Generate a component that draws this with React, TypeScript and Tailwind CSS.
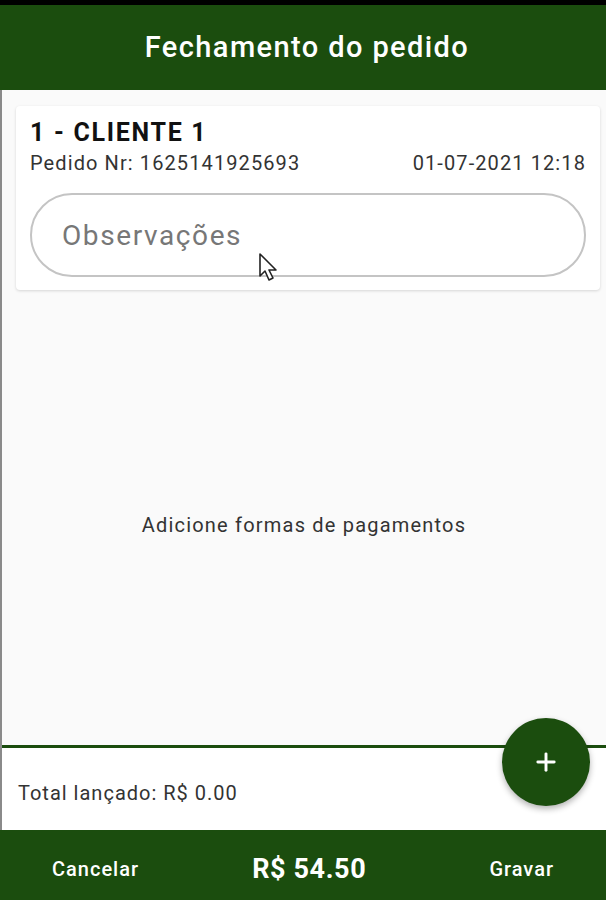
import { Plus } from 'lucide-react';

export default function App() {
  return (
    <div className="flex h-[900px] w-[606px] flex-col overflow-hidden bg-[#fafafa] font-['Roboto',sans-serif]">
      <div className="h-[5px] bg-black" />

      {/* Header */}
      <header className="flex h-[85px] items-center justify-center bg-[#1b4d0e]">
        <h1 className="pl-[8px] text-[29px] font-medium tracking-[1.4px] text-white">Fechamento do pedido</h1>
      </header>

      <main className="flex flex-1 flex-col border-l-2 border-[#8a8a8a]">
        {/* Order card */}
        <div className="relative ml-[14px] mr-[6px] mt-[16px] rounded bg-white px-[14px] pb-[13px] pt-[12px] shadow-[0_1px_3px_rgba(0,0,0,0.15)]">
          <div className="text-[25px] font-bold leading-[30px] tracking-[1.7px] text-[#111]">1 - CLIENTE 1</div>
          <div className="mt-[2px] flex justify-between text-[20px] leading-[26px] tracking-[1.1px] text-[#333]">
            <span>Pedido Nr: 1625141925693</span>
            <span>01-07-2021 12:18</span>
          </div>
          <input
            placeholder="Observações"
            className="mt-[17px] h-[84px] w-full rounded-full border-2 border-[#c4c4c4] px-[30px] text-[28px] tracking-[1.6px] text-[#333] placeholder:text-[#777] focus:outline-none"
          />
          <svg
            className="absolute left-[242px] top-[146px]"
            width="22"
            height="30"
            viewBox="0 0 22 30"
          >
            <path
              d="M2 2 L2 24 L7 19 L11 28 L15 26 L11 18 L18 18 Z"
              fill="white"
              stroke="#222"
              strokeWidth="1.6"
              strokeLinejoin="round"
            />
          </svg>
        </div>

        <div className="flex flex-1 items-center justify-center pt-[14px]">
          <p className="text-[20px] tracking-[1.2px] text-[#333]">Adicione formas de pagamentos</p>
        </div>

        {/* Totals */}
        <div className="relative h-[85px] border-t-[3px] border-[#1b4d0e] bg-white">
          <p className="absolute left-[16px] top-[30px] text-[20px] tracking-[1px] text-[#333]">Total lançado: R$ 0.00</p>
          <button className="absolute left-[500px] top-[-30px] flex h-[88px] w-[88px] items-center justify-center rounded-full bg-[#1b4d0e] text-white shadow-[0_3px_6px_rgba(0,0,0,0.3)]">
            <Plus size={28} strokeWidth={2.5} />
          </button>
        </div>
      </main>

      {/* Bottom bar */}
      <footer className="flex h-[70px] items-center justify-between bg-[#1b4d0e] px-[52px] pt-[8px] text-white">
        <span className="text-[20px] font-medium tracking-[1px]">Cancelar</span>
        <span className="pr-[10px] text-[27px] font-bold tracking-[0.6px]">R$ 54.50</span>
        <span className="text-[20px] font-medium tracking-[1px]">Gravar</span>
      </footer>
    </div>
  );
}
